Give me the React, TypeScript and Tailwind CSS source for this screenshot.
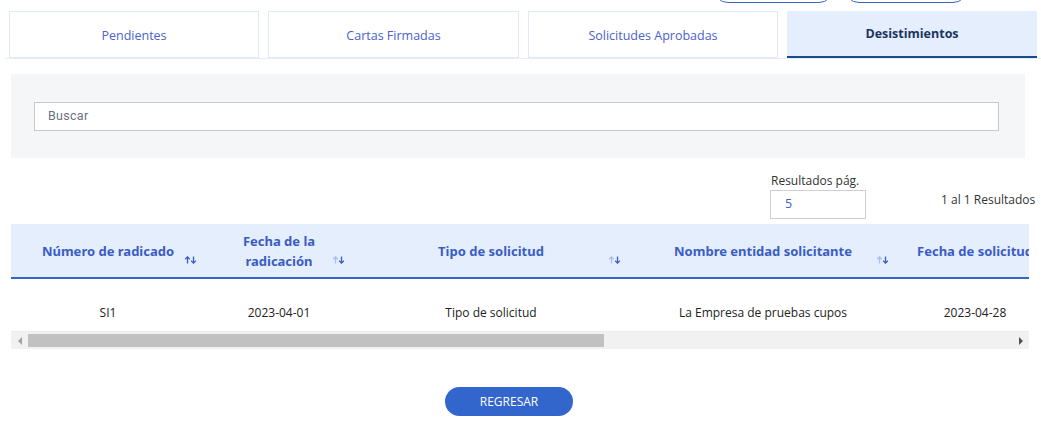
import React from 'react';

const tabs = [
  { label: 'Pendientes', active: false, width: 'w-[250px]' },
  { label: 'Cartas Firmadas', active: false, width: 'w-[251px]' },
  { label: 'Solicitudes Aprobadas', active: false, width: 'w-[250px]' },
  { label: 'Desistimientos', active: true, width: 'w-[250px]' },
];

const columns = [
  { title: 'Número de radicado', width: 'w-[194px]', upFaded: false },
  { title: 'Fecha de la radicación', width: 'w-[148px]', upFaded: true, narrow: true },
  { title: 'Tipo de solicitud', width: 'w-[276px]', upFaded: true },
  { title: 'Nombre entidad solicitante', width: 'w-[268px]', upFaded: true },
  { title: 'Fecha de solicitud', width: 'w-[156px]', upFaded: true, noIcon: true },
];

const row = ['SI1', '2023-04-01', 'Tipo de solicitud', 'La Empresa de pruebas cupos', '2023-04-28'];

function SortIcon({ upFaded }: { upFaded: boolean }) {
  return (
    <svg width="13" height="8" viewBox="0 0 13 8" className="absolute right-[8px] top-[32px]">
      <g stroke={upFaded ? '#a9bdf0' : '#3a5cc5'} strokeWidth="1.3" fill="none">
        <path d="M3.5 7.5V1" />
        <path d="M1.2 3.2L3.5 0.9 5.8 3.2" />
      </g>
      <g stroke="#3a5cc5" strokeWidth="1.3" fill="none">
        <path d="M9.5 0.5V7" />
        <path d="M7.2 4.8L9.5 7.1 11.8 4.8" />
      </g>
    </svg>
  );
}

export default function App() {
  return (
    <div className="w-[1041px] h-[427px] overflow-hidden bg-white font-['Open_Sans',sans-serif]">
      {/* top actions (mostly scrolled off) */}
      <div className="h-[11px] flex justify-end gap-[10px] pr-[73px]">
        <div className="w-[121px] h-[30px] -mt-[27px] rounded-full border border-[#3b64c4]" />
        <div className="w-[124px] h-[30px] -mt-[27px] rounded-full border border-[#3b64c4]" />
      </div>

      {/* tabs */}
      <div className="ml-[5px] flex gap-[9px] pl-[4px] border-b border-[#e3edfb]">
        {tabs.map((t) => (
          <div
            key={t.label}
            className={
              t.active
                ? `${t.width} h-[47px] pt-[2px] flex items-center justify-center bg-[#e5eefc] border-b-2 border-[#1b4a8c] text-[12.5px] font-bold text-[#1c3563]`
                : `${t.width} h-[47px] pt-[3px] flex items-center justify-center border border-[#dfe9f8] text-[12.5px] text-[#4962cc]`
            }
          >
            {t.label}
          </div>
        ))}
      </div>

      {/* search */}
      <div className="mt-[15px] ml-[11px] w-[1014px] h-[84px] bg-[#f5f6f8] pt-[28px] pl-[23px] pr-[26px]">
        <div className="h-[29px] bg-white border border-[#c9c9c9] flex items-center pl-[13px] text-[12.5px] text-[#6b7280] tracking-[0.3px] font-['Roboto',sans-serif]">
          Buscar
        </div>
      </div>

      {/* page size + counter */}
      <div className="mt-[11px] flex items-end ml-[770px] h-[50px]">
        <div className="flex flex-col">
          <span className="text-[12px] text-[#333] leading-[16px] pl-[1px]">Resultados pág.</span>
          <div className="mt-[1px] w-[96px] h-[29px] border border-[#cfcfcf] flex items-center pl-[14px] text-[12.5px] text-[#3d5fc4]">
            5
          </div>
        </div>
        <span className="ml-[75px] mb-[10px] text-[12px] text-[#333] whitespace-nowrap">1 al 1 Resultados</span>
      </div>

      {/* table */}
      <div className="mt-[5px] ml-[11px] w-[1018px] overflow-hidden">
        <div className="flex w-[1100px] h-[55px] bg-[#e5eefc] border-b-2 border-[#3366cc]">
          {columns.map((c) => (
            <div
              key={c.title}
              className={`${c.width} relative shrink-0 flex items-center justify-center text-center text-[13px] font-bold text-[#3a5cc5] leading-[20px] font-['Noto_Sans',sans-serif] whitespace-nowrap`}
            >
              {c.narrow ? (
                <span className="whitespace-normal w-[90px]">{c.title}</span>
              ) : (
                <span>{c.title}</span>
              )}
              {!c.noIcon && <SortIcon upFaded={c.upFaded} />}
            </div>
          ))}
        </div>
        <div className="flex w-[1100px] h-[53px] border-b border-[#ececec]">
          {row.map((v, i) => (
            <div
              key={i}
              className={`${columns[i].width} shrink-0 flex items-end justify-center pb-[9px] text-[12px] text-[#222] whitespace-nowrap`}
            >
              {v}
            </div>
          ))}
        </div>
        {/* scrollbar */}
        <div className="h-[17px] bg-[#f1f1f1] flex items-center">
          <div className="w-[17px] flex justify-center">
            <div className="w-0 h-0 border-y-[4px] border-y-transparent border-r-[4px] border-r-[#a3a3a3]" />
          </div>
          <div className="w-[576px] h-[13px] bg-[#c1c1c1]" />
          <div className="flex-1" />
          <div className="w-[17px] flex justify-center">
            <div className="w-0 h-0 border-y-[4px] border-y-transparent border-l-[4px] border-l-[#505050]" />
          </div>
        </div>
      </div>

      {/* back */}
      <div className="mt-[38px] flex justify-center pr-[23px]">
        <button className="w-[128px] h-[29px] rounded-full bg-[#3366cc] text-white text-[12px] font-['Open_Sans',sans-serif]">
          REGRESAR
        </button>
      </div>
    </div>
  );
}
